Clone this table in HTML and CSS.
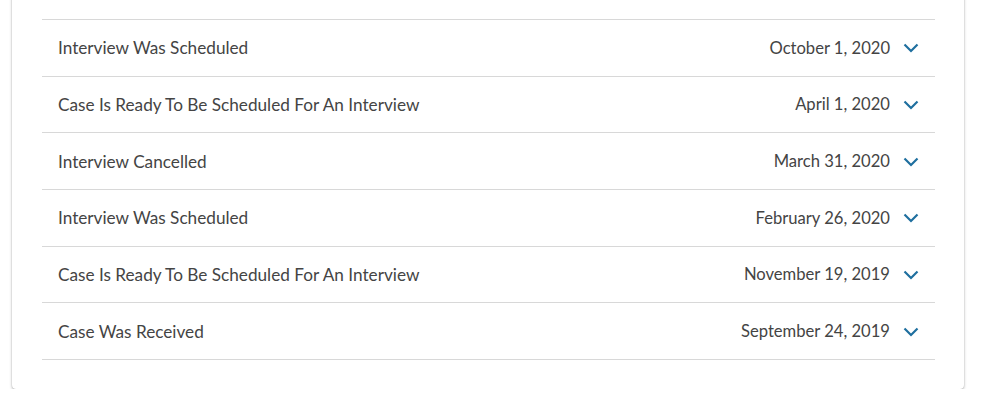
FILE: index.html
```html
<!DOCTYPE html>
<html lang="en">
<head>
<meta charset="utf-8">
<title>Case History</title>
<link rel="stylesheet" href="styles.css">
</head>
<body>
<div class="card">
  <ul class="history">
    <li class="row"><span class="status">Interview Was Scheduled</span><span class="meta"><span class="date">October 1, 2020</span><svg class="chev" viewBox="0 0 16 10" width="16" height="10"><path d="M1.5 1.5 L8 8 L14.5 1.5" fill="none" stroke="currentColor" stroke-width="2.2"/></svg></span></li>
    <li class="row"><span class="status">Case Is Ready To Be Scheduled For An Interview</span><span class="meta"><span class="date">April 1, 2020</span><svg class="chev" viewBox="0 0 16 10" width="16" height="10"><path d="M1.5 1.5 L8 8 L14.5 1.5" fill="none" stroke="currentColor" stroke-width="2.2"/></svg></span></li>
    <li class="row"><span class="status">Interview Cancelled</span><span class="meta"><span class="date">March 31, 2020</span><svg class="chev" viewBox="0 0 16 10" width="16" height="10"><path d="M1.5 1.5 L8 8 L14.5 1.5" fill="none" stroke="currentColor" stroke-width="2.2"/></svg></span></li>
    <li class="row"><span class="status">Interview Was Scheduled</span><span class="meta"><span class="date">February 26, 2020</span><svg class="chev" viewBox="0 0 16 10" width="16" height="10"><path d="M1.5 1.5 L8 8 L14.5 1.5" fill="none" stroke="currentColor" stroke-width="2.2"/></svg></span></li>
    <li class="row"><span class="status">Case Is Ready To Be Scheduled For An Interview</span><span class="meta"><span class="date">November 19, 2019</span><svg class="chev" viewBox="0 0 16 10" width="16" height="10"><path d="M1.5 1.5 L8 8 L14.5 1.5" fill="none" stroke="currentColor" stroke-width="2.2"/></svg></span></li>
    <li class="row"><span class="status">Case Was Received</span><span class="meta"><span class="date">September 24, 2019</span><svg class="chev" viewBox="0 0 16 10" width="16" height="10"><path d="M1.5 1.5 L8 8 L14.5 1.5" fill="none" stroke="currentColor" stroke-width="2.2"/></svg></span></li>
  </ul>
</div>
</body>
</html>
```
FILE: styles.css
```css
html, body {
  margin: 0;
  padding: 0;
  background: #ffffff;
}
body {
  font-family: Lato, "Open Sans", sans-serif;
  color: #444444;
}
.card {
  margin: -12px 0 0 12px;
  width: 952px;
  box-sizing: border-box;
  padding: 31px 29px 29px 30px;
  background: #fff;
  border-radius: 0 0 4px 4px;
  box-shadow: 0 1px 3px rgba(0, 0, 0, 0.3), 0 0 1px rgba(0, 0, 0, 0.2);
}
.history {
  list-style: none;
  margin: 0;
  padding: 0;
  border-top: 1px solid #d8d8d8;
}
.row {
  display: flex;
  justify-content: space-between;
  align-items: center;
  height: 55.67px;
  padding: 0 16px;
  border-bottom: 1px solid #d8d8d8;
  font-size: 17.2px;
}
.date {
  font-size: 16.6px;
}
.meta {
  display: flex;
  align-items: center;
  gap: 13px;
}
.chev {
  color: #1f6f9f;
  margin-top: 1px;
}
```
